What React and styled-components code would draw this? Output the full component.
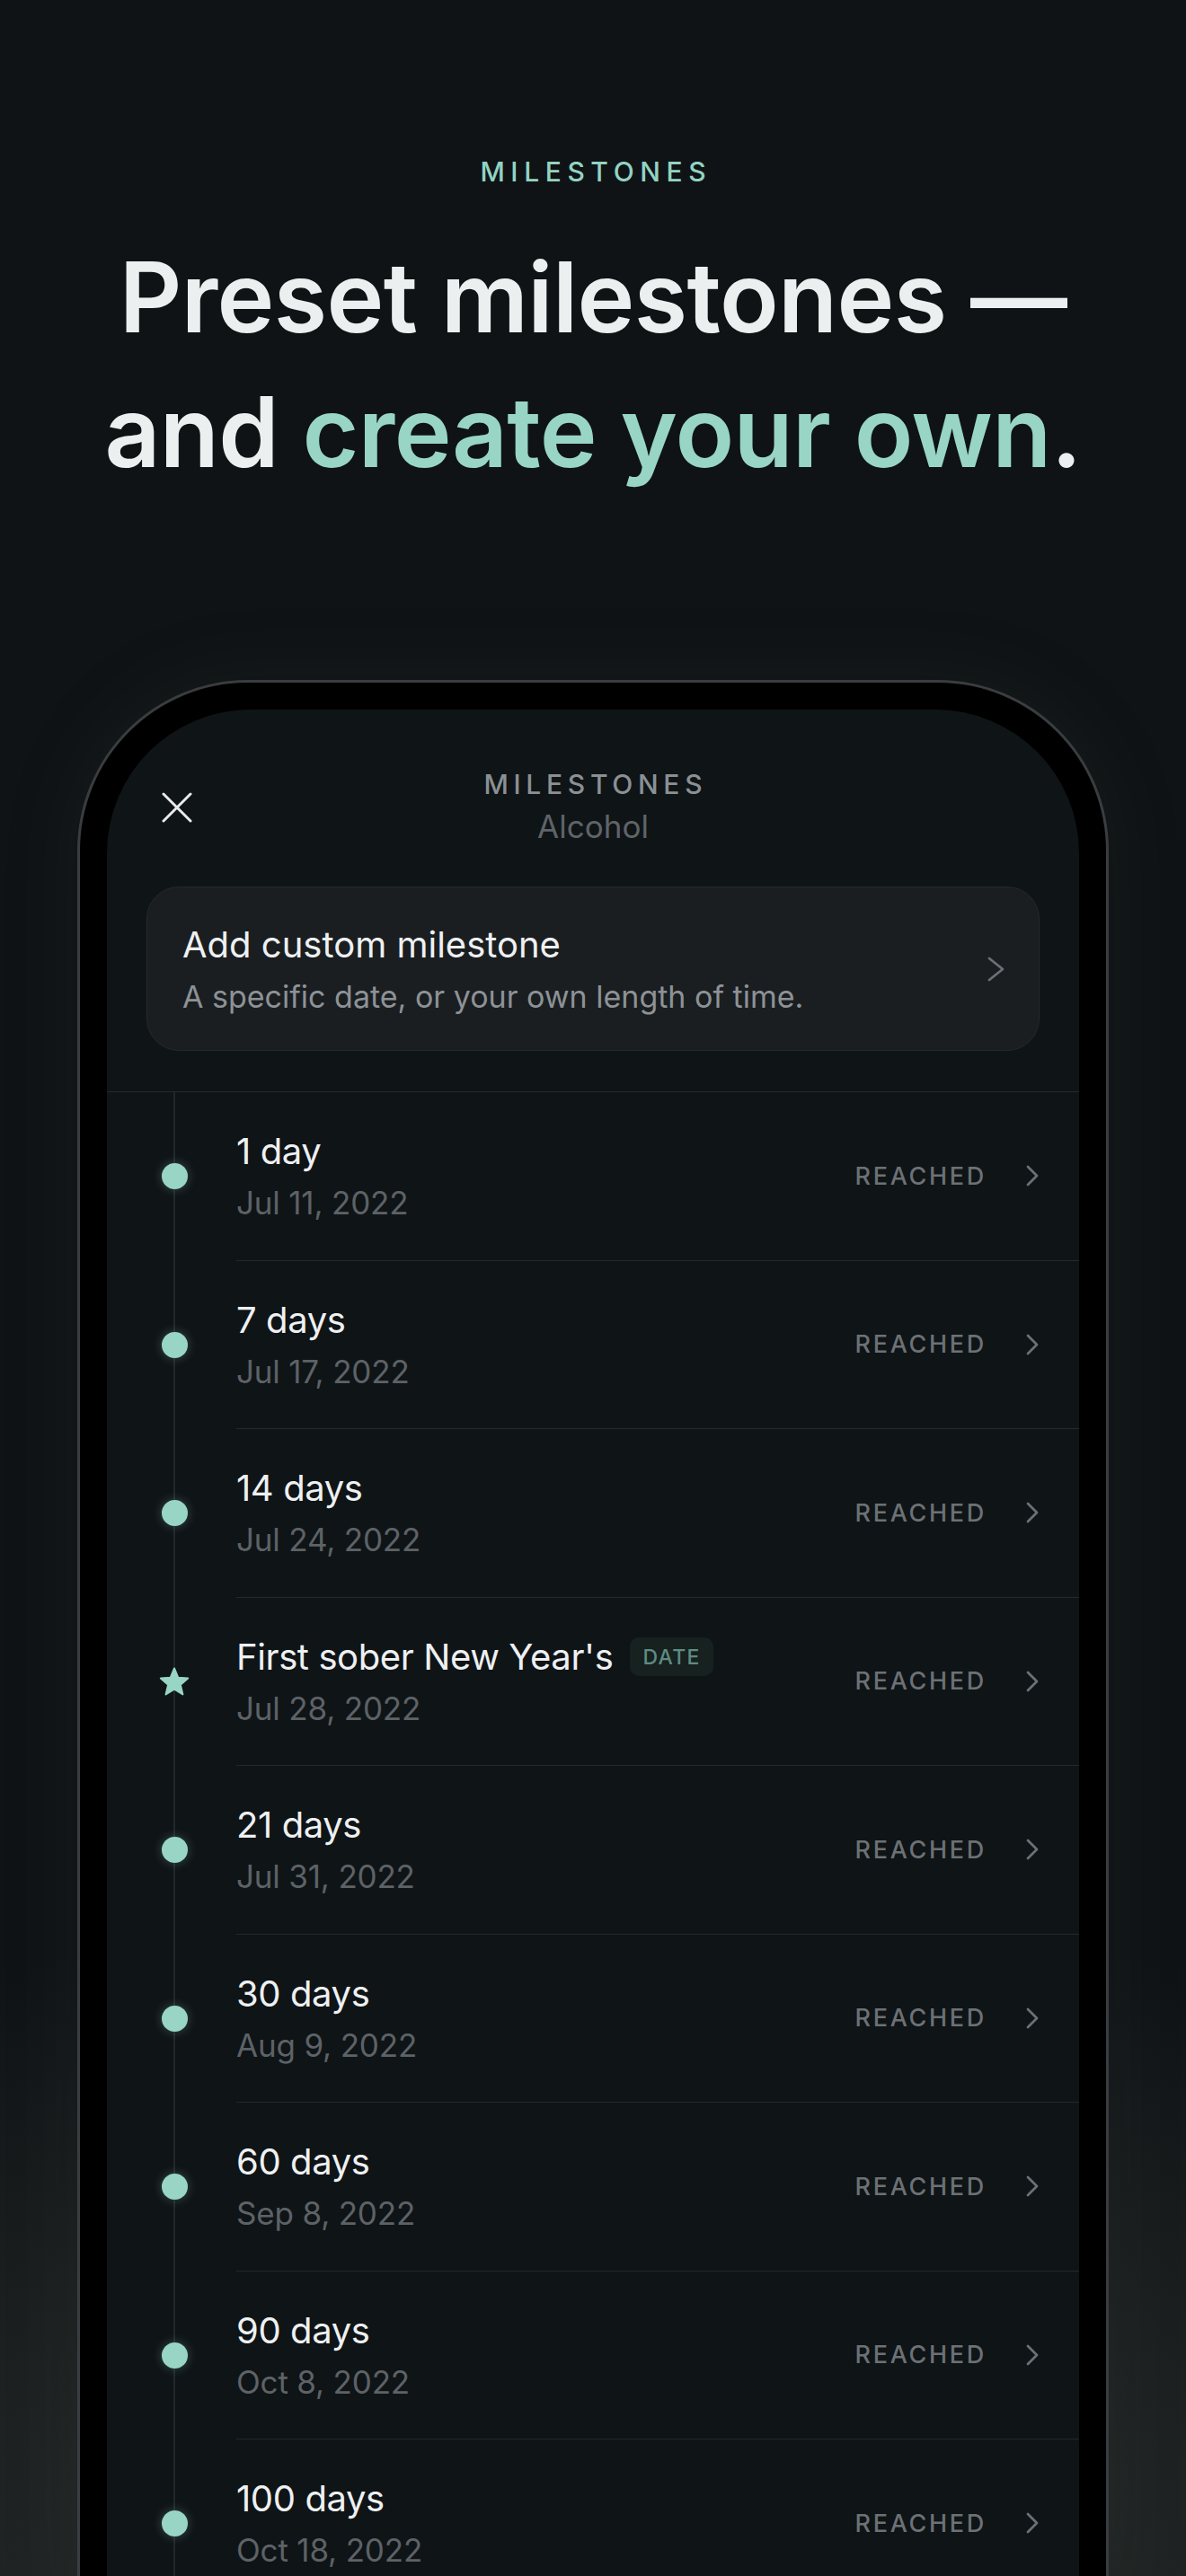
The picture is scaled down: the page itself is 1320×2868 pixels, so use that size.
import React from 'react';
import styled, { createGlobalStyle } from 'styled-components';

const GlobalStyle = createGlobalStyle`
	* { box-sizing: border-box; }
	body {
		margin: 0;
		background: #0f1316;
		font-family: Inter, "Noto Sans", sans-serif;
		-webkit-font-smoothing: antialiased;
	}
`;

const Page = styled.div`
	width: 1320px;
	height: 2868px;
	overflow: hidden;
	padding-top: 173px;
	background:
		radial-gradient(120% 26% at 50% 100%, rgba(44, 48, 45, 0.95) 0%, rgba(15, 19, 22, 0) 100%),
		#0f1316;
	display: flex;
	flex-direction: column;
	align-items: center;
`;

const Eyebrow = styled.div`
	font-size: 30px;
	line-height: 37px;
	font-weight: 500;
	letter-spacing: 0.22em;
	margin-right: -0.22em;
	color: #93d3c2;
`;

const Headline = styled.h1`
	margin: 46px 0 0;
	font-size: 108px;
	line-height: 150px;
	font-weight: 600;
	letter-spacing: -0.006em;
	color: #eceff0;
	text-align: center;

	& em {
		font-style: normal;
		color: #98d5c5;
	}
`;

const Phone = styled.div`
	margin-top: 201px;
	width: 1148px;
	padding: 30px 30px 0;
	background: #000;
	border: 3px solid #3a3d40;
	border-bottom: none;
	border-radius: 190px 190px 0 0;
	box-shadow: 0 0 90px rgba(70, 80, 78, 0.12);
`;

const Screen = styled.div`
	background: #0f1417;
	border-radius: 160px 160px 0 0;
	padding-top: 65px;
	overflow: hidden;
`;

const Header = styled.div`
	display: grid;
	grid-template-columns: 1fr auto 1fr;
	align-items: center;
	padding: 0 44px;
`;

const CloseButton = styled.button`
	justify-self: start;
	margin-left: 17px;
	width: 34px;
	height: 34px;
	padding: 0;
	border: none;
	background: none;
	display: flex;
`;

const HeaderTitles = styled.div`
	display: flex;
	flex-direction: column;
	align-items: center;
	gap: 8px;
`;

const HeaderLabel = styled.div`
	font-size: 30px;
	line-height: 36px;
	font-weight: 500;
	letter-spacing: 0.19em;
	margin-right: -0.19em;
	color: #8b9094;
`;

const HeaderSub = styled.div`
	font-size: 35px;
	line-height: 43px;
	color: #5f6468;
`;

const CustomCard = styled.div`
	margin: 45px 44px 0;
	height: 183px;
	padding: 0 38px 0 39px;
	display: flex;
	align-items: center;
	justify-content: space-between;
	background: #1a1e21;
	border: 1px solid #26292c;
	border-radius: 36px;
`;

const CardText = styled.div`
	display: flex;
	flex-direction: column;
	gap: 13px;
`;

const CardTitle = styled.div`
	font-size: 40px;
	line-height: 48px;
	color: #eef0f1;
`;

const CardSub = styled.div`
	font-size: 34px;
	line-height: 41px;
	color: #8d9296;
`;

const List = styled.div`
	margin-top: 45px;
	border-top: 1px solid #25292c;
`;

const Row = styled.div`
	display: flex;
	height: 187.5px;
`;

const Rail = styled.div`
	width: 144px;
	flex-shrink: 0;
	display: flex;
	align-items: center;
	padding-left: 45px;
	background: linear-gradient(to right, transparent 74px, #22272a 74px, #22272a 76px, transparent 76px);
`;

const Mark = styled.div`
	width: 60px;
	display: flex;
	justify-content: center;
`;

const Dot = styled.span`
	width: 29px;
	height: 29px;
	border-radius: 50%;
	background: #98d5c5;
	box-shadow: 0 0 12px rgba(152, 213, 197, 0.3);
`;

const RowBody = styled.div`
	flex: 1;
	display: flex;
	align-items: center;
	padding-right: 45px;
	border-bottom: 1px solid #25292c;
`;

const RowText = styled.div`
	flex: 1;
	display: flex;
	flex-direction: column;
	gap: 12px;
`;

const RowTitle = styled.div`
	display: flex;
	align-items: center;
	gap: 19px;
	font-size: 40px;
	line-height: 48px;
	letter-spacing: -0.01em;
	color: #eef0f1;
`;

const RowDate = styled.div`
	font-size: 35px;
	line-height: 42px;
	letter-spacing: -0.005em;
	color: #5d6266;
`;

const Badge = styled.span`
	height: 43px;
	padding: 0 14px;
	display: inline-flex;
	align-items: center;
	border-radius: 10px;
	background: #162120;
	color: #5f8b80;
	font-size: 23px;
	font-weight: 500;
	letter-spacing: 0.06em;
`;

const Status = styled.div`
	font-size: 27px;
	font-weight: 500;
	letter-spacing: 0.1em;
	color: #6c7175;
	margin-right: 44px;
`;

const Chevron = ({ w = 14, h = 24 }) => (
	<svg width={w} height={h} viewBox={`0 0 ${w} ${h}`} fill="none">
		<path d={`M2 2 L${w - 2} ${h / 2} L2 ${h - 2}`} stroke="#6c7175" strokeWidth="2.8" strokeLinecap="round" strokeLinejoin="round" />
	</svg>
);

const Star = () => (
	<svg width="34" height="33" viewBox="0 0 34 33">
		<polygon
			points="17,1.5 21.23,11.67 32.22,12.56 23.85,19.72 26.4,30.44 17,24.7 7.6,30.44 10.15,19.72 1.78,12.56 12.77,11.67"
			fill="#98d5c5"
			stroke="#98d5c5"
			strokeWidth="2"
			strokeLinejoin="round"
		/>
	</svg>
);

const milestones = [
	{ title: '1 day', date: 'Jul 11, 2022' },
	{ title: '7 days', date: 'Jul 17, 2022' },
	{ title: '14 days', date: 'Jul 24, 2022' },
	{ title: "First sober New Year's", date: 'Jul 28, 2022', custom: true },
	{ title: '21 days', date: 'Jul 31, 2022' },
	{ title: '30 days', date: 'Aug 9, 2022' },
	{ title: '60 days', date: 'Sep 8, 2022' },
	{ title: '90 days', date: 'Oct 8, 2022' },
	{ title: '100 days', date: 'Oct 18, 2022' },
];

export default function App() {
	return (
		<>
			<GlobalStyle />
			<Page>
				<Eyebrow>MILESTONES</Eyebrow>
				<Headline>
					Preset milestones —<br />
					and <em>create your own</em>.
				</Headline>

				<Phone>
					<Screen>
						<Header>
							<CloseButton aria-label="Close">
								<svg width="34" height="34" viewBox="0 0 34 34">
									<path d="M2 2 L32 32 M32 2 L2 32" stroke="#e9ebec" strokeWidth="3" strokeLinecap="round" />
								</svg>
							</CloseButton>
							<HeaderTitles>
								<HeaderLabel>MILESTONES</HeaderLabel>
								<HeaderSub>Alcohol</HeaderSub>
							</HeaderTitles>
							<div />
						</Header>

						<CustomCard>
							<CardText>
								<CardTitle>Add custom milestone</CardTitle>
								<CardSub>A specific date, or your own length of time.</CardSub>
							</CardText>
							<Chevron w={19} h={28} />
						</CustomCard>

						<List>
							{milestones.map((m) => (
								<Row key={m.title}>
									<Rail>
										<Mark>{m.custom ? <Star /> : <Dot />}</Mark>
									</Rail>
									<RowBody>
										<RowText>
											<RowTitle>
												{m.title}
												{m.custom && <Badge>DATE</Badge>}
											</RowTitle>
											<RowDate>{m.date}</RowDate>
										</RowText>
										<Status>REACHED</Status>
										<Chevron />
									</RowBody>
								</Row>
							))}
						</List>
					</Screen>
				</Phone>
			</Page>
		</>
	);
}
